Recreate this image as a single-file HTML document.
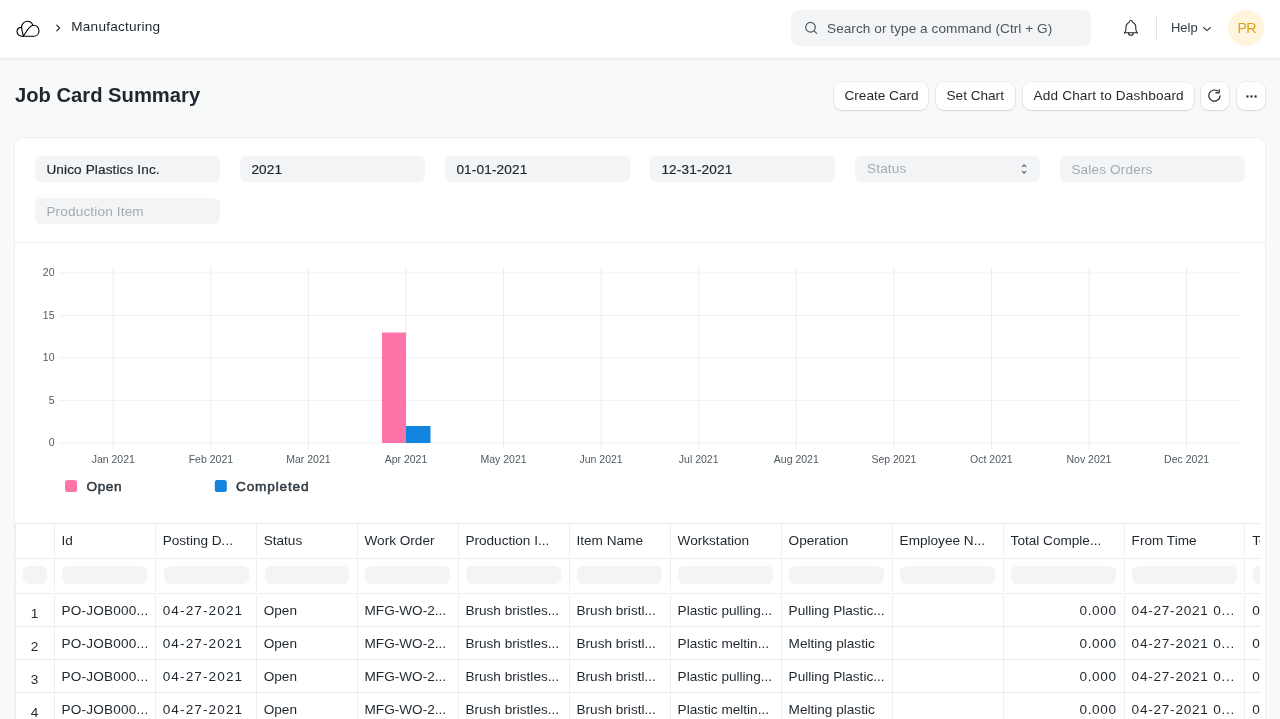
<!DOCTYPE html>
<html>
<head>
<meta charset="utf-8">
<style>
*{box-sizing:border-box;margin:0;padding:0}
html,body{width:1280px;height:719px;overflow:hidden}
body{background:#f8f9f9;font-family:"Liberation Sans",sans-serif;color:#1f272e;position:relative;will-change:transform}
.a{position:absolute;white-space:nowrap;line-height:1}
.t{font-size:13.6px}
#nav{position:absolute;left:0;top:0;width:1280px;height:59px;background:#fff;border-bottom:1px solid #e9ecee;box-shadow:0 1px 2px rgba(0,0,0,0.03)}
.btn{position:absolute;top:81.5px;height:28.5px;background:#fff;border-radius:8px;box-shadow:0 0 0 0.5px rgba(0,0,0,0.10),0 1px 2px rgba(0,0,0,0.10);}
.btn span{position:absolute;top:7px;font-size:13.6px;line-height:1;color:#1f272e;white-space:nowrap}
#card{position:absolute;left:15px;top:138px;width:1250px;height:640px;background:#fff;border-radius:8px;box-shadow:0 0 0 1px #eceef0,0 1px 3px rgba(0,0,0,0.02)}
.inp{position:absolute;width:185px;height:26px;background:#f3f4f6;border-radius:6px}
.inp span{position:absolute;left:11.4px;letter-spacing:0.15px;top:7px;font-size:13.6px;line-height:1;white-space:nowrap}
.ph{color:#a3acb4}
.val{color:#1f272e;-webkit-text-stroke:0.2px #1f272e}
.tc{font-size:13.6px;color:#1f272e}
.num{letter-spacing:0.9px}
.po{letter-spacing:0.2px}
.dt{letter-spacing:1.1px}
.dtt{letter-spacing:0.75px}
.fl{letter-spacing:0.6px}
</style>
</head>
<body>
<div id="nav">
  <svg class="a" style="left:0;top:0" width="60" height="58" viewBox="0 0 60 58" fill="none" stroke="#000" stroke-width="1.1" stroke-linecap="round" stroke-linejoin="round">
    <path d="M23.3,36.3 C19.5,36.5 17,34.5 17,31.8 C17,29.3 19,27.5 21.6,27.4"/>
    <path d="M23.3,36 C22.5,32.5 21.6,29.5 21.6,27 C21.8,23.5 24.5,21.2 27.5,21.2 C30,21.2 32,22.7 32.8,25.2"/>
    <path d="M32.8,25.3 C29,26.2 27.5,30 23.3,36.2"/>
    <path d="M32.8,25.2 C36.5,25 39,27.5 39,30.8 C39,34 36.8,36.3 34,36.3 L23.3,36.3"/>
  </svg>
  <svg class="a" style="left:50.8px;top:20px" width="14" height="16" viewBox="0 0 14 16" fill="none" stroke="#1f272e" stroke-width="1.2" stroke-linecap="round" stroke-linejoin="round"><path d="M5.8,5.2 L8.6,8 L5.8,10.8"/></svg>
  <div class="a t" style="left:71.3px;top:20.3px;color:#1f272e;letter-spacing:0.22px">Manufacturing</div>
  <div class="a" style="left:791px;top:10px;width:300px;height:36px;background:#f3f4f6;border-radius:8px"></div>
  <svg class="a" style="left:800px;top:18px" width="22" height="20" viewBox="0 0 22 20" fill="none" stroke="#505a62" stroke-width="1.2" stroke-linecap="round"><circle cx="10.5" cy="9.25" r="4.85"/><path d="M14.1,12.8 L16.6,15.3"/></svg>
  <div class="a t" style="left:827px;top:21.7px;color:#4c565e;letter-spacing:0.06px">Search or type a command (Ctrl + G)</div>
  <svg class="a" style="left:1118px;top:16px" width="26" height="24" viewBox="1118 16 26 24" fill="none" stroke="#1f272e" stroke-width="1.1" stroke-linecap="round" stroke-linejoin="round">
    <path d="M1124.5,32.8 L1137.5,32.8"/>
    <path d="M1124.5,32.8 C1125.8,31.6 1126,30.2 1126,28.6 L1126,26.6 C1126,25.1 1126.8,24.2 1128,23.2 L1129.3,22.1 C1129.6,20.9 1130.2,20.3 1130.9,20.3 C1131.6,20.3 1132.2,20.9 1132.5,22.1 L1133.8,23.2 C1135,24.2 1135.8,25.1 1135.8,26.6 L1135.8,28.6 C1135.8,30.2 1136,31.6 1137.3,32.8"/>
    <path d="M1128.5,33 C1128.5,34.5 1129.5,35.3 1130.9,35.3 C1132.3,35.3 1133.3,34.5 1133.3,33"/>
  </svg>
  <div class="a" style="left:1156px;top:16px;width:1px;height:24px;background:#e2e6e9"></div>
  <div class="a t" style="left:1170.9px;top:20.8px;color:#333c44;font-size:13px">Help</div>
  <svg class="a" style="left:1200px;top:22px" width="14" height="12" viewBox="0 0 14 12" fill="none" stroke="#333c44" stroke-width="1.05" stroke-linecap="round" stroke-linejoin="round"><path d="M3.5,5.5 L7,8.6 L10.5,5.5"/></svg>
  <div class="a" style="left:1228px;top:10px;width:36px;height:36px;border-radius:50%;background:#fff4dc"></div>
  <div class="a" style="left:1237.5px;top:21px;font-size:14.2px;letter-spacing:-0.6px;color:#dfa21e">PR</div>
</div>

<div class="a" style="left:15px;top:85px;font-size:20.2px;font-weight:700;color:#1f272e">Job Card Summary</div>

<div class="btn" style="left:833.5px;width:94.5px"><span style="left:11px">Create Card</span></div>
<div class="btn" style="left:935.5px;width:79.5px"><span style="left:11px">Set Chart</span></div>
<div class="btn" style="left:1022.5px;width:171px"><span style="left:11px;letter-spacing:0.17px">Add Chart to Dashboard</span></div>
<div class="btn" style="left:1200.5px;width:28.7px">
  <svg style="position:absolute;left:-0.6px;top:-0.4px" width="29" height="29" viewBox="0 0 29 29" fill="none" stroke="#1f272e" stroke-width="1.2" stroke-linecap="round" stroke-linejoin="round"><path d="M20.0,14.9 A5.6,5.6 0 1 1 17.6,10.0"/><path d="M19.2,8.7 L19.2,11.9 L15.9,11.9"/></svg>
</div>
<div class="btn" style="left:1236.5px;width:28.5px">
  <svg style="position:absolute;left:0;top:0" width="29" height="29" viewBox="0 0 29 29" fill="#1f272e"><rect x="9.4" y="13.4" width="2.1" height="2.1"/><rect x="13.4" y="13.4" width="2.1" height="2.1"/><rect x="17.5" y="13.4" width="2.1" height="2.1"/></svg>
</div>

<div id="card"></div>
<div class="inp" style="left:35px;top:156px"><span class="val" style="letter-spacing:0.12px;-webkit-text-stroke:0.2px #1f272e">Unico Plastics Inc.</span></div>
<div class="inp" style="left:240px;top:156px"><span class="val">2021</span></div>
<div class="inp" style="left:445px;top:156px"><span class="val">01-01-2021</span></div>
<div class="inp" style="left:650px;top:156px"><span class="val">12-31-2021</span></div>
<div class="inp" style="left:855px;top:156px"><span class="ph" style="top:6px;left:12px">Status</span>
  <svg style="position:absolute;left:163px;top:6px" width="12" height="14" viewBox="0 0 12 14" fill="none" stroke="#505a62" stroke-width="1.1" stroke-linecap="round" stroke-linejoin="round"><path d="M4.4,4.6 L6.1,2.8 L7.8,4.6"/><path d="M4.4,9.3 L6.1,11.1 L7.8,9.3"/></svg>
</div>
<div class="inp" style="left:1060px;top:156px"><span class="ph">Sales Orders</span></div>
<div class="inp" style="left:35px;top:198px"><span class="ph">Production Item</span></div>
<div class="a" style="left:15px;top:242px;width:1250px;height:1px;background:#eef0f2"></div>

<svg class="a" style="left:0;top:250px" width="1280" height="260" viewBox="0 250 1280 260">
<g stroke="#eef0f3" stroke-width="1">
<line x1="59" y1="442.90" x2="1240.5" y2="442.90"/>
<line x1="59" y1="400.42" x2="1240.5" y2="400.42"/>
<line x1="59" y1="357.94" x2="1240.5" y2="357.94"/>
<line x1="59" y1="315.46" x2="1240.5" y2="315.46"/>
<line x1="59" y1="272.98" x2="1240.5" y2="272.98"/>
</g><g stroke="#ececee" stroke-width="1">
<line x1="113.30" y1="267" x2="113.30" y2="449"/>
<line x1="210.87" y1="267" x2="210.87" y2="449"/>
<line x1="308.44" y1="267" x2="308.44" y2="449"/>
<line x1="406.01" y1="267" x2="406.01" y2="449"/>
<line x1="503.58" y1="267" x2="503.58" y2="449"/>
<line x1="601.15" y1="267" x2="601.15" y2="449"/>
<line x1="698.72" y1="267" x2="698.72" y2="449"/>
<line x1="796.29" y1="267" x2="796.29" y2="449"/>
<line x1="893.86" y1="267" x2="893.86" y2="449"/>
<line x1="991.43" y1="267" x2="991.43" y2="449"/>
<line x1="1089.00" y1="267" x2="1089.00" y2="449"/>
<line x1="1186.57" y1="267" x2="1186.57" y2="449"/>
</g>
<g font-family="Liberation Sans" font-size="10.5" fill="#505a62">
<text x="54.5" y="446.2" text-anchor="end">0</text>
<text x="54.5" y="403.7" text-anchor="end">5</text>
<text x="54.5" y="361.2" text-anchor="end">10</text>
<text x="54.5" y="318.8" text-anchor="end">15</text>
<text x="54.5" y="276.3" text-anchor="end">20</text>
<text x="113.3" y="463" text-anchor="middle">Jan 2021</text>
<text x="210.9" y="463" text-anchor="middle">Feb 2021</text>
<text x="308.4" y="463" text-anchor="middle">Mar 2021</text>
<text x="406.0" y="463" text-anchor="middle">Apr 2021</text>
<text x="503.6" y="463" text-anchor="middle">May 2021</text>
<text x="601.1" y="463" text-anchor="middle">Jun 2021</text>
<text x="698.7" y="463" text-anchor="middle">Jul 2021</text>
<text x="796.3" y="463" text-anchor="middle">Aug 2021</text>
<text x="893.9" y="463" text-anchor="middle">Sep 2021</text>
<text x="991.4" y="463" text-anchor="middle">Oct 2021</text>
<text x="1089.0" y="463" text-anchor="middle">Nov 2021</text>
<text x="1186.6" y="463" text-anchor="middle">Dec 2021</text>
</g>
<rect x="382" y="332.5" width="24" height="110.5" fill="#ff74a8"/>
<rect x="406" y="426" width="24.5" height="17" fill="#1283de"/>
<rect x="65" y="480" width="12" height="12" rx="2.5" fill="#ff74a8"/>
<rect x="214.8" y="480" width="12" height="12" rx="2.5" fill="#1283de"/>
<g font-family="Liberation Sans" font-size="13.6" font-weight="400" fill="#333c44" stroke="#333c44" stroke-width="0.55">
<text x="86.5" y="491" letter-spacing="0.6">Open</text><text x="236" y="491" letter-spacing="0.85">Completed</text>
</g></svg>
<div class="a" style="left:15px;top:523px;width:1245px;height:196px;overflow:hidden">
<div class="a" style="left:0;top:0px;width:1245px;height:1px;background:#e9ecef"></div>
<div class="a" style="left:0;top:35px;width:1245px;height:1px;background:#e9ecef"></div>
<div class="a" style="left:0;top:70px;width:1245px;height:1px;background:#e9ecef"></div>
<div class="a" style="left:0;top:103px;width:1245px;height:1px;background:#e9ecef"></div>
<div class="a" style="left:0;top:136px;width:1245px;height:1px;background:#e9ecef"></div>
<div class="a" style="left:0;top:169px;width:1245px;height:1px;background:#e9ecef"></div>
<div class="a" style="left:0px;top:0px;width:1px;height:33px;background:#eceff1"></div>
<div class="a" style="left:0px;top:35px;width:1px;height:33px;background:#eceff1"></div>
<div class="a" style="left:0px;top:70px;width:1px;height:126px;background:#eceff1"></div>
<div class="a" style="left:39px;top:0px;width:1px;height:33px;background:#eceff1"></div>
<div class="a" style="left:39px;top:35px;width:1px;height:33px;background:#eceff1"></div>
<div class="a" style="left:39px;top:70px;width:1px;height:126px;background:#eceff1"></div>
<div class="a" style="left:140px;top:0px;width:1px;height:33px;background:#eceff1"></div>
<div class="a" style="left:140px;top:35px;width:1px;height:33px;background:#eceff1"></div>
<div class="a" style="left:140px;top:70px;width:1px;height:126px;background:#eceff1"></div>
<div class="a" style="left:241px;top:0px;width:1px;height:33px;background:#eceff1"></div>
<div class="a" style="left:241px;top:35px;width:1px;height:33px;background:#eceff1"></div>
<div class="a" style="left:241px;top:70px;width:1px;height:126px;background:#eceff1"></div>
<div class="a" style="left:342px;top:0px;width:1px;height:33px;background:#eceff1"></div>
<div class="a" style="left:342px;top:35px;width:1px;height:33px;background:#eceff1"></div>
<div class="a" style="left:342px;top:70px;width:1px;height:126px;background:#eceff1"></div>
<div class="a" style="left:443px;top:0px;width:1px;height:33px;background:#eceff1"></div>
<div class="a" style="left:443px;top:35px;width:1px;height:33px;background:#eceff1"></div>
<div class="a" style="left:443px;top:70px;width:1px;height:126px;background:#eceff1"></div>
<div class="a" style="left:554px;top:0px;width:1px;height:33px;background:#eceff1"></div>
<div class="a" style="left:554px;top:35px;width:1px;height:33px;background:#eceff1"></div>
<div class="a" style="left:554px;top:70px;width:1px;height:126px;background:#eceff1"></div>
<div class="a" style="left:655px;top:0px;width:1px;height:33px;background:#eceff1"></div>
<div class="a" style="left:655px;top:35px;width:1px;height:33px;background:#eceff1"></div>
<div class="a" style="left:655px;top:70px;width:1px;height:126px;background:#eceff1"></div>
<div class="a" style="left:766px;top:0px;width:1px;height:33px;background:#eceff1"></div>
<div class="a" style="left:766px;top:35px;width:1px;height:33px;background:#eceff1"></div>
<div class="a" style="left:766px;top:70px;width:1px;height:126px;background:#eceff1"></div>
<div class="a" style="left:877px;top:0px;width:1px;height:33px;background:#eceff1"></div>
<div class="a" style="left:877px;top:35px;width:1px;height:33px;background:#eceff1"></div>
<div class="a" style="left:877px;top:70px;width:1px;height:126px;background:#eceff1"></div>
<div class="a" style="left:988px;top:0px;width:1px;height:33px;background:#eceff1"></div>
<div class="a" style="left:988px;top:35px;width:1px;height:33px;background:#eceff1"></div>
<div class="a" style="left:988px;top:70px;width:1px;height:126px;background:#eceff1"></div>
<div class="a" style="left:1109px;top:0px;width:1px;height:33px;background:#eceff1"></div>
<div class="a" style="left:1109px;top:35px;width:1px;height:33px;background:#eceff1"></div>
<div class="a" style="left:1109px;top:70px;width:1px;height:126px;background:#eceff1"></div>
<div class="a" style="left:1229px;top:0px;width:1px;height:33px;background:#eceff1"></div>
<div class="a" style="left:1229px;top:35px;width:1px;height:33px;background:#eceff1"></div>
<div class="a" style="left:1229px;top:70px;width:1px;height:126px;background:#eceff1"></div>
<div class="a tc" style="left:46.5px;top:10.5px">Id</div>
<div class="a tc" style="left:147.7px;top:10.5px">Posting D...</div>
<div class="a tc" style="left:248.7px;top:10.5px">Status</div>
<div class="a tc" style="left:349.5px;top:10.5px">Work Order</div>
<div class="a tc" style="left:450.4px;top:10.5px">Production I...</div>
<div class="a tc" style="left:561.5px;top:10.5px">Item Name</div>
<div class="a tc" style="left:662.6px;top:10.5px">Workstation</div>
<div class="a tc" style="left:773.6px;top:10.5px">Operation</div>
<div class="a tc" style="left:884.6px;top:10.5px">Employee N...</div>
<div class="a tc" style="left:995.6px;top:10.5px">Total Comple...</div>
<div class="a tc" style="left:1116.6px;top:10.5px">From Time</div>
<div class="a tc" style="left:1237.2px;top:10.5px">To Time</div>
<div class="a" style="left:8.0px;top:43px;width:24.0px;height:18px;background:#f3f4f6;border-radius:6px"></div>
<div class="a" style="left:47.3px;top:43px;width:85.2px;height:18px;background:#f3f4f6;border-radius:6px"></div>
<div class="a" style="left:148.5px;top:43px;width:85.0px;height:18px;background:#f3f4f6;border-radius:6px"></div>
<div class="a" style="left:249.5px;top:43px;width:84.8px;height:18px;background:#f3f4f6;border-radius:6px"></div>
<div class="a" style="left:350.3px;top:43px;width:84.9px;height:18px;background:#f3f4f6;border-radius:6px"></div>
<div class="a" style="left:451.2px;top:43px;width:95.1px;height:18px;background:#f3f4f6;border-radius:6px"></div>
<div class="a" style="left:562.3px;top:43px;width:85.1px;height:18px;background:#f3f4f6;border-radius:6px"></div>
<div class="a" style="left:663.4px;top:43px;width:95.0px;height:18px;background:#f3f4f6;border-radius:6px"></div>
<div class="a" style="left:774.4px;top:43px;width:95.0px;height:18px;background:#f3f4f6;border-radius:6px"></div>
<div class="a" style="left:885.4px;top:43px;width:95.0px;height:18px;background:#f3f4f6;border-radius:6px"></div>
<div class="a" style="left:996.4px;top:43px;width:105.0px;height:18px;background:#f3f4f6;border-radius:6px"></div>
<div class="a" style="left:1117.4px;top:43px;width:104.6px;height:18px;background:#f3f4f6;border-radius:6px"></div>
<div class="a" style="left:1238.0px;top:43px;width:139.0px;height:18px;background:#f3f4f6;border-radius:6px"></div>
<div class="a tc" style="left:15.8px;top:83.5px">1</div>
<div class="a tc po" style="left:46.5px;top:80.5px">PO-JOB000...</div>
<div class="a tc dt" style="left:147.7px;top:80.5px">04-27-2021</div>
<div class="a tc" style="left:248.7px;top:80.5px">Open</div>
<div class="a tc" style="left:349.5px;top:80.5px">MFG-WO-2...</div>
<div class="a tc" style="left:450.4px;top:80.5px">Brush bristles...</div>
<div class="a tc" style="left:561.5px;top:80.5px">Brush bristl...</div>
<div class="a tc" style="left:662.6px;top:80.5px">Plastic pulling...</div>
<div class="a tc" style="left:773.6px;top:80.5px">Pulling Plastic...</div>
<div class="a tc fl" style="right:143.4px;top:80.5px">0.000</div>
<div class="a tc dtt" style="left:1116.6px;top:80.5px">04-27-2021 0...</div>
<div class="a tc dtt" style="left:1237.2px;top:80.5px">04-27-2021 0...</div>
<div class="a tc" style="left:15.8px;top:116.5px">2</div>
<div class="a tc po" style="left:46.5px;top:113.5px">PO-JOB000...</div>
<div class="a tc dt" style="left:147.7px;top:113.5px">04-27-2021</div>
<div class="a tc" style="left:248.7px;top:113.5px">Open</div>
<div class="a tc" style="left:349.5px;top:113.5px">MFG-WO-2...</div>
<div class="a tc" style="left:450.4px;top:113.5px">Brush bristles...</div>
<div class="a tc" style="left:561.5px;top:113.5px">Brush bristl...</div>
<div class="a tc" style="left:662.6px;top:113.5px">Plastic meltin...</div>
<div class="a tc" style="left:773.6px;top:113.5px">Melting plastic</div>
<div class="a tc fl" style="right:143.4px;top:113.5px">0.000</div>
<div class="a tc dtt" style="left:1116.6px;top:113.5px">04-27-2021 0...</div>
<div class="a tc dtt" style="left:1237.2px;top:113.5px">04-27-2021 0...</div>
<div class="a tc" style="left:15.8px;top:149.5px">3</div>
<div class="a tc po" style="left:46.5px;top:146.5px">PO-JOB000...</div>
<div class="a tc dt" style="left:147.7px;top:146.5px">04-27-2021</div>
<div class="a tc" style="left:248.7px;top:146.5px">Open</div>
<div class="a tc" style="left:349.5px;top:146.5px">MFG-WO-2...</div>
<div class="a tc" style="left:450.4px;top:146.5px">Brush bristles...</div>
<div class="a tc" style="left:561.5px;top:146.5px">Brush bristl...</div>
<div class="a tc" style="left:662.6px;top:146.5px">Plastic pulling...</div>
<div class="a tc" style="left:773.6px;top:146.5px">Pulling Plastic...</div>
<div class="a tc fl" style="right:143.4px;top:146.5px">0.000</div>
<div class="a tc dtt" style="left:1116.6px;top:146.5px">04-27-2021 0...</div>
<div class="a tc dtt" style="left:1237.2px;top:146.5px">04-27-2021 0...</div>
<div class="a tc" style="left:15.8px;top:182.5px">4</div>
<div class="a tc po" style="left:46.5px;top:179.5px">PO-JOB000...</div>
<div class="a tc dt" style="left:147.7px;top:179.5px">04-27-2021</div>
<div class="a tc" style="left:248.7px;top:179.5px">Open</div>
<div class="a tc" style="left:349.5px;top:179.5px">MFG-WO-2...</div>
<div class="a tc" style="left:450.4px;top:179.5px">Brush bristles...</div>
<div class="a tc" style="left:561.5px;top:179.5px">Brush bristl...</div>
<div class="a tc" style="left:662.6px;top:179.5px">Plastic meltin...</div>
<div class="a tc" style="left:773.6px;top:179.5px">Melting plastic</div>
<div class="a tc fl" style="right:143.4px;top:179.5px">0.000</div>
<div class="a tc dtt" style="left:1116.6px;top:179.5px">04-27-2021 0...</div>
<div class="a tc dtt" style="left:1237.2px;top:179.5px">04-27-2021 0...</div>
</div>
</body>
</html>
